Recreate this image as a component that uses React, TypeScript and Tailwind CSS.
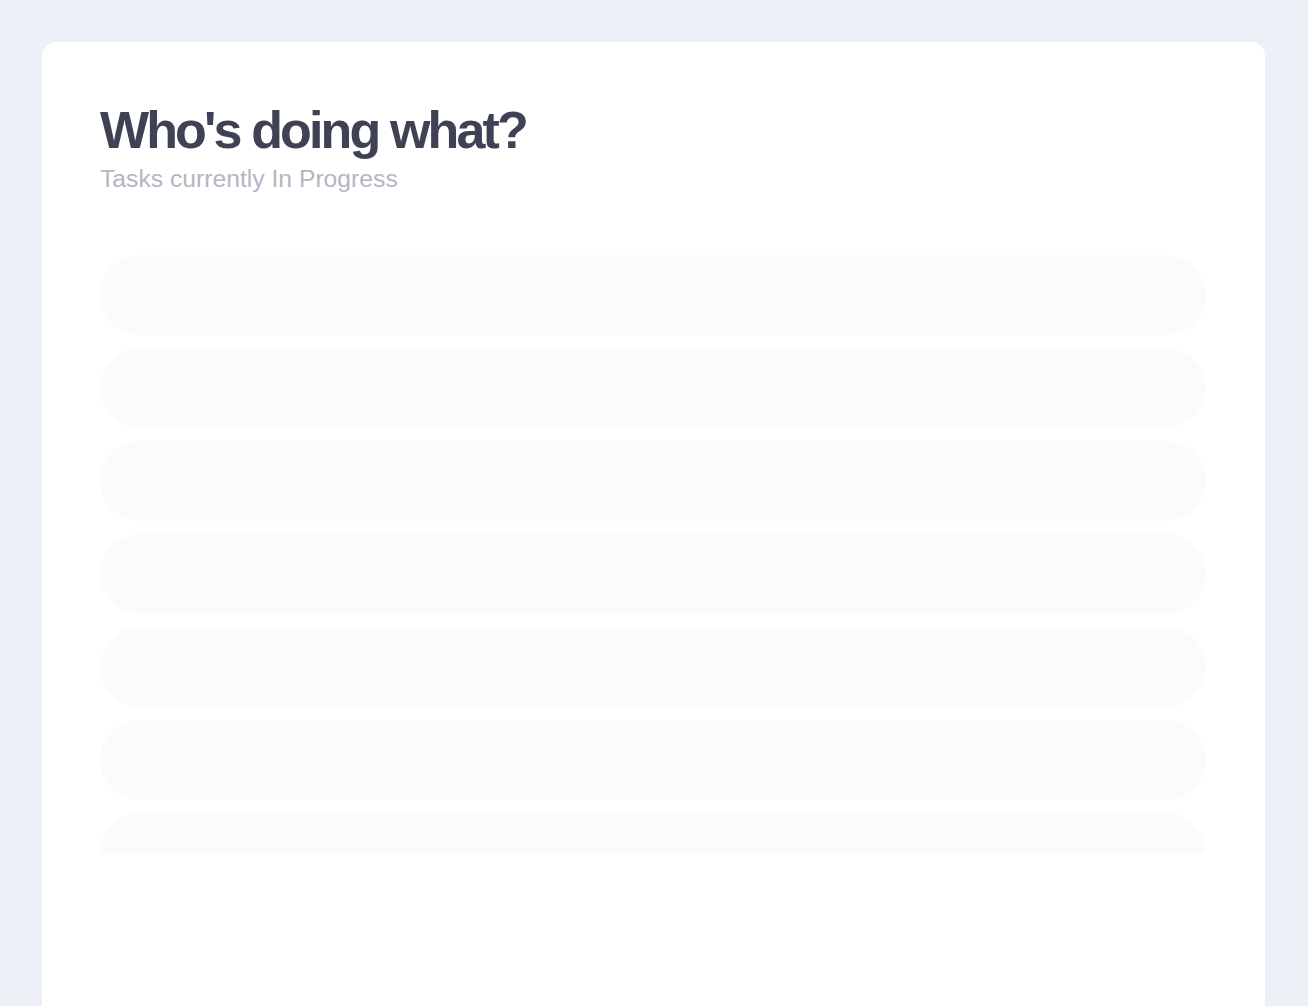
import React from 'react';

// placeholder rows shown while the in-progress tasks are loading
const SKELETON_ROWS = 7;

const TaskSkeleton: React.FC = () => (
  <div className="h-20 w-full shrink-0 rounded-full bg-[#fbfbfb]" />
);

const App: React.FC = () => {
  return (
    <div className="min-h-screen bg-[#edf0f7] pl-[42px] pr-[43px] pt-[42px]" style={{ fontFamily: '"Liberation Sans", Arial, sans-serif' }}>
      <div className="min-h-[1000px] rounded-[14px] bg-white pl-[58px] pr-[59px] pt-[57px]">
        <h1 className="text-[52px] font-bold leading-[62px] tracking-[-0.055em] text-[#3f4254]">Who's doing what?</h1>
        <p className="mt-[3px] text-[24.7px] leading-[30px] text-[#b5b5c3]">Tasks currently In Progress</p>

        <div className="mt-[61px] flex h-[599px] flex-col gap-[13px] overflow-hidden">
          {Array.from({ length: SKELETON_ROWS }).map((_, i) => (
            <TaskSkeleton key={i} />
          ))}
        </div>
      </div>
    </div>
  );
};

export default App;
